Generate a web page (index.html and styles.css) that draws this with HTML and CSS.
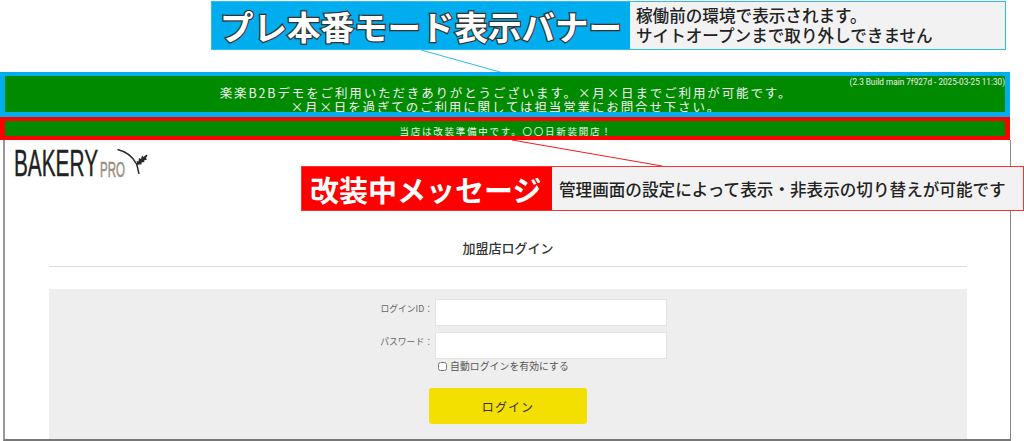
FILE: index.html
```html
<!DOCTYPE html>
<html lang="ja">
<head>
<meta charset="utf-8">
<title>加盟店ログイン</title>
<link rel="stylesheet" href="styles.css">
</head>
<body>
<div class="page">
  <div class="screen">
    <div class="notice notice-demo">
      <span class="build">(2.3 Build main 7f927d - 2025-03-25 11:30)</span>
      <p class="notice-text">楽楽B2Bデモをご利用いただきありがとうございます。×月×日までご利用が可能です。<br>×月×日を過ぎてのご利用に関しては担当営業にお問合せ下さい。</p>
    </div>
    <div class="notice notice-shop">
      <p class="shop-text">当店は改装準備中です。〇〇日新装開店！</p>
    </div>
    <main class="content">
      <header class="brand">
        <svg class="logo" width="140" height="34" viewBox="0 0 140 34" role="img" aria-label="BAKERY PRO">
          <text class="logo-main" x="0" y="27" textLength="84" lengthAdjust="spacingAndGlyphs">BAKERY</text>
          <text class="logo-pro" x="86" y="28" textLength="25" lengthAdjust="spacingAndGlyphs">PRO</text>
          <path class="logo-stem" d="M103.500 0.500C112 2.500 119 8 122.500 15C123.800 18.500 124.300 22 125 25"/>
          <path class="logo-stem" d="M122.500 15.500L131 8.500"/>
          <path class="logo-ear" d="M122.500 12L124.500 12.500L125 9L127 10L128 6.500L129.500 8L132.500 5.500L133.500 6.500L132 9L133 10.500L130 11.500L130.500 13L127.500 13.500L127.500 15.500L124.500 15.500L124 17Z"/>
        </svg>
      </header>
      <h1 class="login-title">加盟店ログイン</h1>
      <form class="login-panel">
        <div class="field">
          <label class="field-label" for="login-id">ログインID：</label>
          <input class="field-input" id="login-id" type="text">
        </div>
        <div class="field">
          <label class="field-label" for="login-pass">パスワード：</label>
          <input class="field-input" id="login-pass" type="password">
        </div>
        <label class="auto-login"><input class="auto-check" type="checkbox">自動ログインを有効にする</label>
        <button class="login-button" type="button">ログイン</button>
      </form>
    </main>
  </div>

  <svg class="leaders" width="1024" height="441" viewBox="0 0 1024 441" aria-hidden="true">
    <line class="leader-blue" x1="421" y1="50" x2="500" y2="72"/>
    <line class="leader-red" x1="512" y1="140" x2="662" y2="166"/>
  </svg>

  <aside class="callout callout-blue">
    <div class="callout-title title-outlined">プレ本番モード表示バナー</div>
    <div class="callout-body">稼働前の環境で表示されます。<br>サイトオープンまで取り外しできません</div>
  </aside>
  <aside class="callout callout-red">
    <div class="callout-title title-solid">改装中メッセージ</div>
    <div class="callout-body">管理画面の設定によって表示・非表示の切り替えが可能です</div>
  </aside>
</div>
</body>
</html>
```

FILE: styles.css
```css
* { box-sizing: border-box; }

html, body {
  margin: 0;
  padding: 0;
  background: #fff;
}

body {
  font-family: "Noto Sans CJK JP", "Noto Sans", sans-serif;
  color: #333;
}

.page {
  position: relative;
  width: 1024px;
  height: 441px;
  padding-top: 72px;
  overflow: hidden;
}

.screen {
  width: 1011px;
}

/* banners */
.notice {
  position: relative;
  width: 1010px;
  border-style: solid;
  border-width: 4px 5px;
  background: #008a00;
  color: #f2f2f2;
  text-align: center;
  overflow: hidden;
}

.notice-demo {
  height: 45px;
  border-color: #00aeef;
  border-top-width: 4px;
  border-bottom-width: 5px;
}

.notice-shop {
  height: 23px;
  border-color: #ff0000;
}

.notice-text {
  margin: 0;
  padding: 10px 0 0 2px;
  font-size: 12.500px;
  line-height: 14px;
  letter-spacing: 1.87px;
}

.shop-text {
  margin: 0;
  padding: 3px 0 0 2px;
  font-size: 9.500px;
  line-height: 14px;
  letter-spacing: 1.75px;
}

.build {
  position: absolute;
  top: 2px;
  right: 0;
  font-family: Roboto, "Liberation Sans", sans-serif;
  font-size: 8.200px;
  line-height: 9px;
  white-space: nowrap;
}

/* page frame */
.content {
  width: 1008px;
  height: 301px;
  margin-left: 3px;
  border-left: 2px solid #999;
  border-right: 1px solid #888;
  border-bottom: 2px solid #777;
  overflow: hidden;
}

.brand {
  height: 50px;
  padding: 9px 0 0 9px;
}

.logo {
  display: block;
  overflow: visible;
}

.logo-main {
  font-family: "Liberation Sans", sans-serif;
  font-size: 36px;
  fill: #222;
  stroke: #222;
  stroke-width: 0.4;
}

.logo-pro {
  font-family: "Liberation Sans", sans-serif;
  font-size: 22px;
  fill: #9c8f82;
  stroke: #9c8f82;
  stroke-width: 0.6;
}

.logo-stem {
  fill: none;
  stroke: #2a2a2a;
  stroke-width: 1.5;
}

.logo-ear {
  fill: #2a2a2a;
}

/* login */
.login-title {
  width: 918px;
  height: 77px;
  margin: 0 0 22px 44px;
  padding-top: 48px;
  border-bottom: 1px solid #ddd;
  font-size: 13px;
  line-height: 19px;
  font-weight: 500;
  text-align: center;
  color: #333;
}

.login-panel {
  display: flex;
  flex-direction: column;
  width: 918px;
  height: 150px;
  margin-left: 44px;
  padding: 10px 0 0 321px;
  background: #eee;
  gap: 6px;
}

.field {
  display: flex;
  gap: 2px;
}

.field-label {
  width: 63px;
  padding-top: 1px;
  font-size: 8.800px;
  line-height: 18px;
  color: #666;
  text-align: right;
  white-space: nowrap;
}

.field-input {
  width: 232px;
  height: 27px;
  border: 1px solid #e2e2e2;
  background: #fff;
}

.auto-login {
  display: flex;
  align-items: center;
  margin: -6px 0 0 68px;
  font-size: 9.800px;
  line-height: 15px;
  letter-spacing: 0.1px;
  color: #555;
}

.auto-check {
  width: 9px;
  height: 9px;
  margin: 0 3px 0 0;
}

.login-button {
  width: 158px;
  height: 36px;
  margin: 8px 0 0 59px;
  border: 0;
  border-radius: 3px;
  background: #f3df00;
  font-family: inherit;
  font-size: 12px;
  letter-spacing: 1.1px;
  color: #333;
}

/* annotation overlays */
.leaders {
  position: absolute;
  top: 0;
  left: 0;
}

.leader-blue {
  stroke: #29bdf2;
  stroke-width: 1;
}

.leader-red {
  stroke: #f01c1c;
  stroke-width: 1;
}

.callout {
  position: absolute;
  display: flex;
  align-items: stretch;
}

.callout-blue {
  top: 1px;
  left: 211px;
  width: 795px;
  height: 49px;
  border: 1px solid #2dbdf2;
  background: #f2f2f2;
}

.callout-red {
  top: 166px;
  left: 301px;
  width: 723px;
  height: 45px;
  border: 1px solid #f53333;
  background: #f2f2f2;
}

.callout-title {
  display: flex;
  align-items: center;
  white-space: nowrap;
  color: #fff;
}

.title-outlined {
  width: 418px;
  padding-left: 8px;
  background: #00aeef;
  font-size: 33.500px;
  font-weight: 700;
  -webkit-text-stroke: 2.500px #333;
  paint-order: stroke fill;
}

.title-solid {
  width: 250px;
  padding-left: 8px;
  background: #ff0000;
  font-size: 29px;
  font-weight: 700;
}

.callout-body {
  display: flex;
  align-items: center;
  white-space: nowrap;
  color: #222;
  font-weight: 500;
}

.callout-blue .callout-body {
  display: block;
  padding: 3px 0 0 6px;
  font-size: 16.600px;
  line-height: 20px;
}

.callout-red .callout-body {
  padding-left: 7px;
  font-size: 16.600px;
}
```
